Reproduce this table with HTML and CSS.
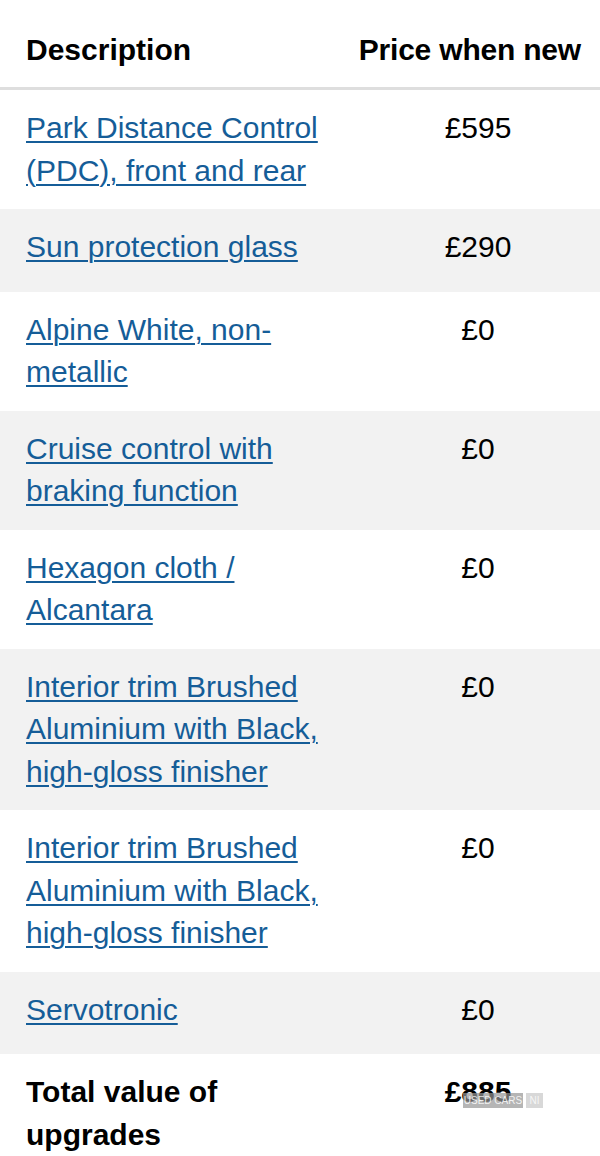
FILE: index.html
```html
<!DOCTYPE html>
<html lang="en">
<head>
<meta charset="utf-8">
<title>Upgrades</title>
<link rel="stylesheet" href="styles.css">
</head>
<body>
<table class="upgrades">
  <colgroup><col class="col-desc"><col class="col-price"></colgroup>
  <thead>
    <tr><th class="h-desc">Description</th><th class="h-price">Price when new</th></tr>
  </thead>
  <tbody>
    <tr><td class="desc"><a href="#">Park Distance Control (PDC), front and rear</a></td><td class="price">£595</td></tr>
    <tr class="alt"><td class="desc"><a href="#">Sun protection glass</a></td><td class="price">£290</td></tr>
    <tr><td class="desc"><a href="#">Alpine White, non-metallic</a></td><td class="price">£0</td></tr>
    <tr class="alt"><td class="desc"><a href="#">Cruise control with braking function</a></td><td class="price">£0</td></tr>
    <tr><td class="desc"><a href="#">Hexagon cloth / Alcantara</a></td><td class="price">£0</td></tr>
    <tr class="alt"><td class="desc"><a href="#">Interior trim Brushed Aluminium with Black, high-gloss finisher</a></td><td class="price">£0</td></tr>
    <tr><td class="desc"><a href="#">Interior trim Brushed Aluminium with Black, high-gloss finisher</a></td><td class="price">£0</td></tr>
    <tr class="alt"><td class="desc"><a href="#">Servotronic</a></td><td class="price">£0</td></tr>
    <tr class="total"><td class="desc">Total value of upgrades</td><td class="price">£885</td></tr>
  </tbody>
</table>
<div class="watermark"><span class="wm-main">USED CARS</span><span class="wm-ni">NI</span></div>
</body>
</html>
```
FILE: styles.css
```css
html, body {
  margin: 0;
  padding: 0;
  background: #ffffff;
}
body {
  font-family: "Liberation Sans", Arial, Helvetica, sans-serif;
  font-size: 30px;
  color: #000000;
  position: relative;
  width: 600px;
  height: 1156px;
  overflow: hidden;
}
.upgrades {
  width: 600px;
  border-collapse: collapse;
  table-layout: fixed;
}
.col-desc { width: 356px; }
.col-price { width: 244px; }
th {
  font-weight: 700;
  line-height: 42px;
  padding: 29px 0 16px 0;
  border-bottom: 3px solid #dedede;
  vertical-align: top;
  white-space: nowrap;
}
.h-desc {
  text-align: left;
  padding-left: 26px;
}
.h-price {
  text-align: right;
  padding-right: 19px;
  letter-spacing: -0.2px;
}
td {
  vertical-align: top;
  line-height: 42.5px;
}
.desc {
  padding: 17px 20px 17px 26px;
}
.price {
  text-align: center;
  padding: 17px 0 23px 0;
}
.alt { background: #f2f2f2; }
.desc a {
  color: #155d98;
  text-decoration: underline;
  text-decoration-thickness: 1.5px;
  text-underline-offset: 3px;
}
.total td { font-weight: 700; }
.watermark {
  position: absolute;
  left: 463px;
  top: 1093px;
  display: flex;
  gap: 3px;
  font-family: "Liberation Sans", Arial, sans-serif;
  font-size: 10px;
  line-height: 15px;
}
.wm-main {
  background: rgba(150, 150, 150, 0.7);
  color: rgba(255, 255, 255, 0.85);
  width: 60px;
  text-align: center;
}
.wm-ni {
  background: rgba(200, 200, 200, 0.7);
  color: rgba(255, 255, 255, 0.8);
  width: 17px;
  text-align: center;
}
```
